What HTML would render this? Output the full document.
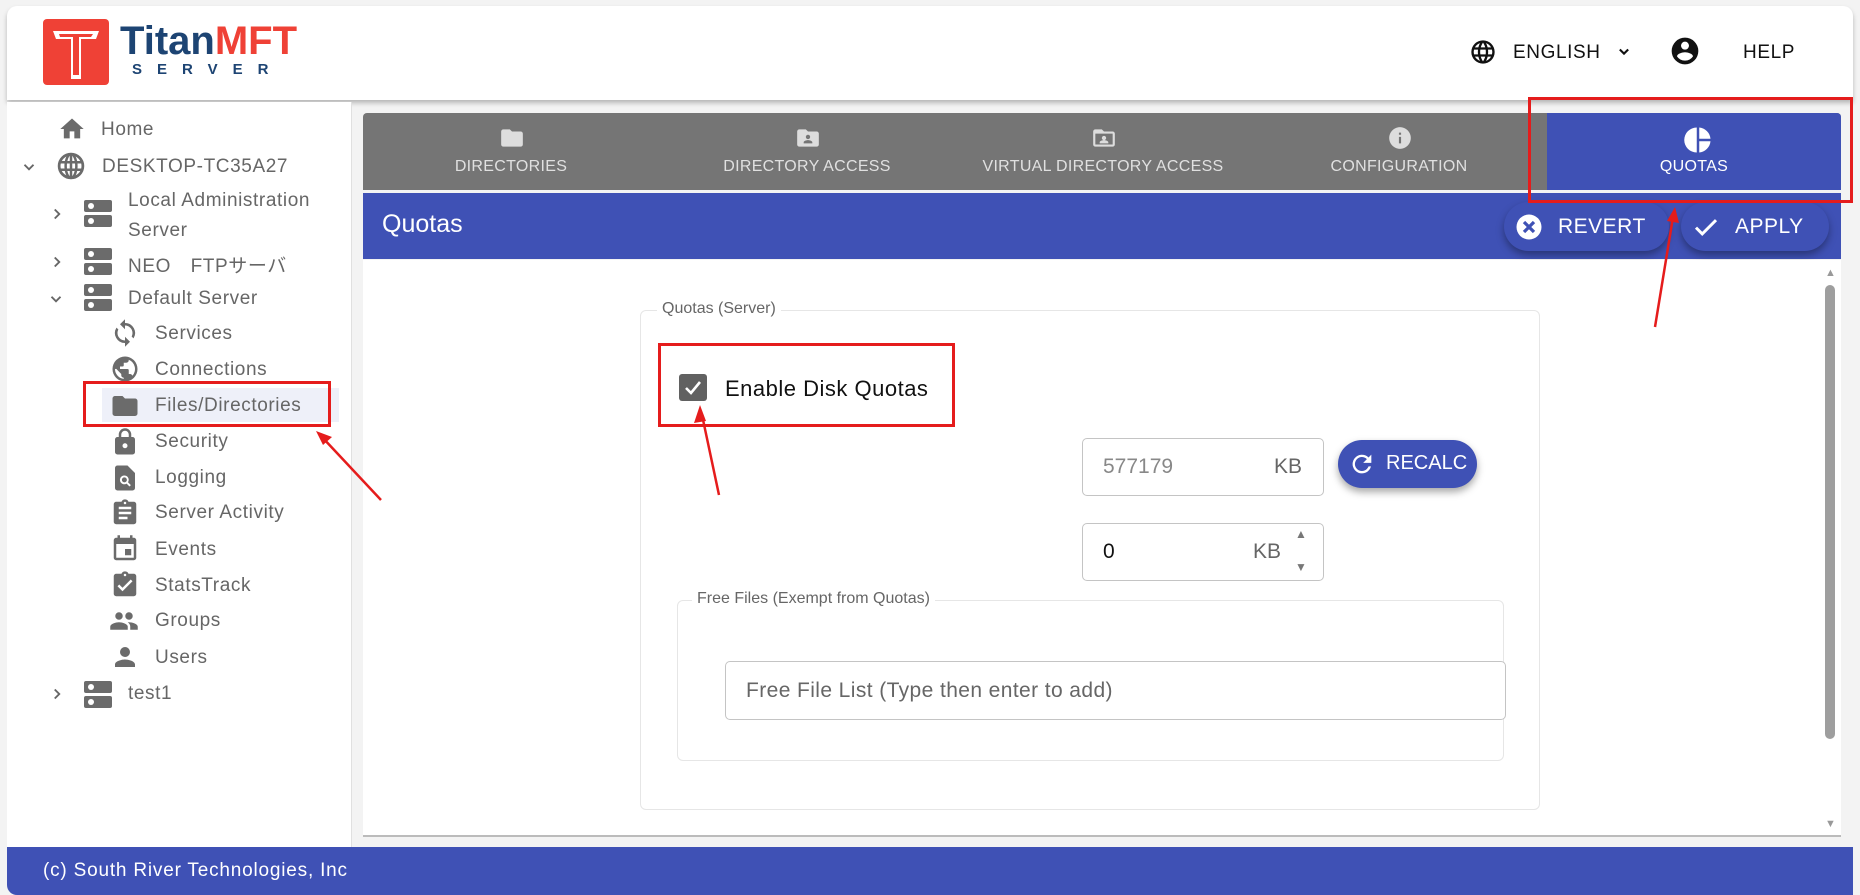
<!DOCTYPE html>
<html><head><meta charset="utf-8"><style>
*{box-sizing:border-box;margin:0;padding:0}
body{width:1860px;height:895px;overflow:hidden;background:#f3f3f3;font-family:"Liberation Sans","Noto Sans CJK JP",sans-serif;position:relative}
.a{position:absolute}
.hdr{left:7px;top:6px;width:1846px;height:94px;background:#fff;border-radius:10px 10px 0 0;box-shadow:0 3px 5px rgba(0,0,0,.25)}
.side{left:7px;top:102px;width:345px;height:746px;background:#fff;border-right:1px solid #e0e0e0}
.ti{color:#666;font-size:19px;white-space:nowrap;letter-spacing:0.6px}
.ti svg{position:absolute}
.main{left:363px;top:260px;width:1478px;height:577px;background:#fff;border-bottom:2px solid #bbb}
.tabs{left:363px;top:113px;width:1478px;height:77px;background:#757575;border-radius:4px 4px 0 0}
.tab{position:absolute;top:0;height:77px;width:296px;color:#e0e0e0;font-size:16px;text-align:center;letter-spacing:0.3px}
.tab span{position:absolute;left:0;right:0;top:45px}
.tab svg{position:absolute;left:136px;top:12px}
.blue{background:#3f51b5}
.btn{border-radius:25px;background:#3f51b5;color:#fff;box-shadow:0 4px 8px rgba(0,0,0,.35);font-size:21px}
.fs{border:1px solid #e6e6e6;border-radius:6px}
.lg{background:#fff;color:#666;font-size:16px;padding:0 5px}
.inp{border:1px solid #c4c4c4;border-radius:5px;background:#fff}
.red{border:3px solid #e51c1c}
</style></head><body>
<div class="a hdr"></div>
<svg class="a" style="left:43px;top:19px" width="66" height="66" viewBox="0 0 66 66"><rect width="66" height="66" rx="4" fill="#ef4136"/><path d="M10 12h46l-3 8H38v40h-10V20H13z" fill="#fff"/><path d="M16 15h34l-2 3H36v38h-6V18H17z" fill="#ef4136"/></svg>
<div class="a" style="left:120px;top:19px;font-size:40px;font-weight:bold;color:#1d4473;letter-spacing:0px">Titan<span style="color:#ef4136">MFT</span></div>
<div class="a" style="left:132px;top:61px;font-size:15px;font-weight:bold;color:#1d4473;letter-spacing:15px">SERVER</div>
<svg class="a" style="left:1469px;top:38px" width="28" height="28" viewBox="0 0 24 24"><path fill="#111" d="M12 2a10 10 0 100 20 10 10 0 000-20zm6.9 6h-2.9a15.7 15.7 0 00-1.4-3.6A8 8 0 0118.9 8zM12 4c.8 1.2 1.5 2.5 1.9 4h-3.8c.4-1.4 1.1-2.8 1.9-4zM4.3 14a8 8 0 010-4h3.4a16 16 0 000 4zm.8 2h2.9c.3 1.3.8 2.5 1.4 3.6A8 8 0 015.1 16zM8 8H5.1a8 8 0 014.3-3.6C8.8 5.5 8.4 6.7 8 8zm4 12c-.8-1.2-1.5-2.5-1.9-4h3.8c-.4 1.4-1.1 2.8-1.9 4zm2.3-6H9.7a14.7 14.7 0 010-4h4.6a14.7 14.7 0 010 4zm.3 5.6c.6-1.1 1.1-2.3 1.4-3.6h2.9a8 8 0 01-4.3 3.6zm1.7-5.6a16 16 0 000-4h3.4a8 8 0 010 4z"/></svg>
<div class="a" style="left:1513px;top:42px;font-size:19px;color:#111;letter-spacing:0.6px">ENGLISH</div>
<svg class="a" style="left:1614px;top:42px" width="20" height="20" viewBox="0 0 24 24"><path d="M7 9l5 5 5-5" stroke="#111" stroke-width="2.5" fill="none"/></svg>
<svg class="a" style="left:1669px;top:35px" width="32" height="32" viewBox="0 0 24 24"><path fill="#111" d="M12 2a10 10 0 100 20 10 10 0 000-20zm0 3a3 3 0 110 6 3 3 0 010-6zm0 14.2a7.2 7.2 0 01-6-3.2c0-2 4-3.1 6-3.1s6 1.1 6 3.1a7.2 7.2 0 01-6 3.2z"/></svg>
<div class="a" style="left:1743px;top:42px;font-size:19px;color:#111;letter-spacing:0.6px">HELP</div>

<div class="a side"></div>
<div class="a" style="left:102px;top:388px;width:237px;height:34px;background:#eef0f9"></div>
<svg class="a" style="left:57px;top:115px" width="30" height="28" viewBox="0 0 24 24"><path fill="#6b6b6b" d="M10 20v-6h4v6h5v-8h3L12 3 2 12h3v8z"/></svg>
<div class="a ti" style="left:101px;top:119px">Home</div>
<svg class="a" style="left:20px;top:158px" width="18" height="18" viewBox="0 0 24 24"><path d="M6 9l6 6 6-6" stroke="#666" stroke-width="2.5" fill="none"/></svg>
<svg class="a" style="left:56px;top:151px" width="30" height="30" viewBox="0 0 24 24"><circle cx="12" cy="12" r="9.5" fill="none" stroke="#6b6b6b" stroke-width="2.2"/><path d="M2.5 9h19M2.5 15h19M12 2.5v19" stroke="#6b6b6b" stroke-width="2"/><ellipse cx="12" cy="12" rx="4.3" ry="9.5" fill="none" stroke="#6b6b6b" stroke-width="2"/></svg>
<div class="a ti" style="left:102px;top:156px">DESKTOP-TC35A27</div>

<svg class="a" style="left:48px;top:205px" width="18" height="18" viewBox="0 0 24 24"><path d="M9 6l6 6-6 6" stroke="#666" stroke-width="2.5" fill="none"/></svg>
<div class="a" style="left:84px;top:200px;width:28px;height:28px"><div class="a" style="left:0;top:0;width:28px;height:12px;background:#6b6b6b;border-radius:2px"></div><div class="a" style="left:0;top:15px;width:28px;height:12px;background:#6b6b6b;border-radius:2px"></div><div class="a" style="left:4px;top:3px;width:6px;height:6px;border-radius:3px;background:#fff"></div><div class="a" style="left:4px;top:18px;width:6px;height:6px;border-radius:3px;background:#fff"></div></div>
<div class="a ti" style="left:128px;top:186px;line-height:30px">Local Administration<br>Server</div>

<svg class="a" style="left:48px;top:253px" width="18" height="18" viewBox="0 0 24 24"><path d="M9 6l6 6-6 6" stroke="#666" stroke-width="2.5" fill="none"/></svg>
<div class="a" style="left:84px;top:248px;width:28px;height:28px"><div class="a" style="left:0;top:0;width:28px;height:12px;background:#6b6b6b;border-radius:2px"></div><div class="a" style="left:0;top:15px;width:28px;height:12px;background:#6b6b6b;border-radius:2px"></div><div class="a" style="left:4px;top:3px;width:6px;height:6px;border-radius:3px;background:#fff"></div><div class="a" style="left:4px;top:18px;width:6px;height:6px;border-radius:3px;background:#fff"></div></div>
<div class="a ti" style="left:128px;top:251px">NEO　FTPサーバ</div>

<svg class="a" style="left:47px;top:290px" width="18" height="18" viewBox="0 0 24 24"><path d="M6 9l6 6 6-6" stroke="#666" stroke-width="2.5" fill="none"/></svg>
<div class="a" style="left:84px;top:284px;width:28px;height:28px"><div class="a" style="left:0;top:0;width:28px;height:12px;background:#6b6b6b;border-radius:2px"></div><div class="a" style="left:0;top:15px;width:28px;height:12px;background:#6b6b6b;border-radius:2px"></div><div class="a" style="left:4px;top:3px;width:6px;height:6px;border-radius:3px;background:#fff"></div><div class="a" style="left:4px;top:18px;width:6px;height:6px;border-radius:3px;background:#fff"></div></div>
<div class="a ti" style="left:128px;top:288px">Default Server</div>

<svg class="a" style="left:110px;top:318px" width="30" height="30" viewBox="0 0 24 24"><path fill="#6b6b6b" d="M12 4V1L8 5l4 4V6a6 6 0 016 6c0 1-.3 2-.7 2.8l1.5 1.5A8 8 0 0012 4zm0 14a6 6 0 01-6-6c0-1 .3-2 .7-2.8L5.2 7.7A8 8 0 0012 20v3l4-4-4-4z"/></svg>
<div class="a ti" style="left:155px;top:323px">Services</div>
<svg class="a" style="left:110px;top:354px" width="30" height="30" viewBox="0 0 24 24"><path fill="#6b6b6b" d="M12 2a10 10 0 100 20 10 10 0 000-20zm-1 17.9A8 8 0 014 12l1-.1L9 16v1a2 2 0 002 2zm6.9-2.5A2 2 0 0016 16h-1v-3a1 1 0 00-1-1H8v-2h2a1 1 0 001-1V7h2a2 2 0 002-2v-.4a8 8 0 012.9 12.8z"/></svg>
<div class="a ti" style="left:155px;top:359px">Connections</div>
<svg class="a" style="left:109px;top:391px" width="32" height="30" viewBox="0 0 24 24"><path fill="#6b6b6b" d="M10 4H4a2 2 0 00-2 2v12a2 2 0 002 2h16a2 2 0 002-2V8a2 2 0 00-2-2h-8z"/></svg>
<div class="a ti" style="left:155px;top:395px">Files/Directories</div>
<svg class="a" style="left:110px;top:427px" width="30" height="30" viewBox="0 0 24 24"><path fill="#6b6b6b" d="M18 8h-1V6A5 5 0 007 6v2H6a2 2 0 00-2 2v10a2 2 0 002 2h12a2 2 0 002-2V10a2 2 0 00-2-2zM9 6a3 3 0 016 0v2H9zm3 11a2 2 0 110-4 2 2 0 010 4z"/></svg>
<div class="a ti" style="left:155px;top:431px">Security</div>
<svg class="a" style="left:110px;top:463px" width="30" height="30" viewBox="0 0 24 24"><path fill="#6b6b6b" d="M14 2H6a2 2 0 00-2 2v16a2 2 0 002 2h12a2 2 0 002-2V8zm-2.5 15a3.5 3.5 0 112.9-1.6l2.3 2.3-1.1 1.1-2.3-2.3c-.5.3-1.1.5-1.8.5zm0-5.5a2 2 0 100 4 2 2 0 000-4z"/></svg>
<div class="a ti" style="left:155px;top:467px">Logging</div>
<svg class="a" style="left:110px;top:498px" width="30" height="30" viewBox="0 0 24 24"><path fill="#6b6b6b" d="M19 3h-4.2a3 3 0 00-5.6 0H5a2 2 0 00-2 2v14a2 2 0 002 2h14a2 2 0 002-2V5a2 2 0 00-2-2zm-7 0a1 1 0 110 2 1 1 0 010-2zm2 14H7v-2h7zm3-4H7v-2h10zm0-4H7V7h10z"/></svg>
<div class="a ti" style="left:155px;top:502px">Server Activity</div>
<svg class="a" style="left:110px;top:534px" width="30" height="30" viewBox="0 0 24 24"><path fill="#6b6b6b" d="M17 12h-5v5h5zM16 1v2H8V1H6v2H5a2 2 0 00-2 2v14a2 2 0 002 2h14a2 2 0 002-2V5a2 2 0 00-2-2h-1V1zm3 18H5V8h14z"/></svg>
<div class="a ti" style="left:155px;top:539px">Events</div>
<svg class="a" style="left:110px;top:570px" width="30" height="30" viewBox="0 0 24 24"><path fill="#6b6b6b" d="M19 3h-4.2a3 3 0 00-5.6 0H5a2 2 0 00-2 2v14a2 2 0 002 2h14a2 2 0 002-2V5a2 2 0 00-2-2zm-7 0a1 1 0 110 2 1 1 0 010-2zm-2 14l-4-4 1.4-1.4 2.6 2.6 6.6-6.6L18 9z"/></svg>
<div class="a ti" style="left:155px;top:575px">StatsTrack</div>
<svg class="a" style="left:107px;top:606px" width="34" height="30" viewBox="0 0 24 24"><path fill="#6b6b6b" d="M16 11a3 3 0 100-6 3 3 0 000 6zm-8 0a3 3 0 100-6 3 3 0 000 6zm0 2c-2.3 0-7 1.2-7 3.5V19h14v-2.5C15 14.2 10.3 13 8 13zm8 0h-1c1.2.8 2 2 2 3.5V19h6v-2.5c0-2.3-4.7-3.5-7-3.5z"/></svg>
<div class="a ti" style="left:155px;top:610px">Groups</div>
<svg class="a" style="left:110px;top:642px" width="30" height="30" viewBox="0 0 24 24"><path fill="#6b6b6b" d="M12 12a4 4 0 100-8 4 4 0 000 8zm0 2c-2.7 0-8 1.3-8 4v2h16v-2c0-2.7-5.3-4-8-4z"/></svg>
<div class="a ti" style="left:155px;top:647px">Users</div>
<svg class="a" style="left:48px;top:685px" width="18" height="18" viewBox="0 0 24 24"><path d="M9 6l6 6-6 6" stroke="#666" stroke-width="2.5" fill="none"/></svg>
<div class="a" style="left:84px;top:681px;width:28px;height:28px"><div class="a" style="left:0;top:0;width:28px;height:12px;background:#6b6b6b;border-radius:2px"></div><div class="a" style="left:0;top:15px;width:28px;height:12px;background:#6b6b6b;border-radius:2px"></div><div class="a" style="left:4px;top:3px;width:6px;height:6px;border-radius:3px;background:#fff"></div><div class="a" style="left:4px;top:18px;width:6px;height:6px;border-radius:3px;background:#fff"></div></div>
<div class="a ti" style="left:128px;top:683px">test1</div>

<div class="a tabs">
 <div class="tab" style="left:0"><svg width="26" height="26" viewBox="0 0 24 24"><path fill="#ddd" d="M10 4H4a2 2 0 00-2 2v12a2 2 0 002 2h16a2 2 0 002-2V8a2 2 0 00-2-2h-8z"/></svg><span>DIRECTORIES</span></div>
 <div class="tab" style="left:296px"><svg width="26" height="26" viewBox="0 0 24 24"><path fill="#ddd" d="M20 6h-8l-2-2H4a2 2 0 00-2 2v12a2 2 0 002 2h16a2 2 0 002-2V8a2 2 0 00-2-2zm-8 3a2 2 0 110 4 2 2 0 010-4zm4 8H8v-1c0-1.3 2.7-2 4-2s4 .7 4 2z"/></svg><span>DIRECTORY ACCESS</span></div>
 <div class="tab" style="left:592px"><svg width="26" height="26" viewBox="0 0 24 24"><path fill="#ddd" d="M20 6h-8l-2-2H4a2 2 0 00-2 2v12a2 2 0 002 2h16a2 2 0 002-2V8a2 2 0 00-2-2zm0 12H4V8h16zm-8-8a2 2 0 110 4 2 2 0 010-4zm4 7H8v-1c0-1.3 2.7-2 4-2s4 .7 4 2z"/></svg><span>VIRTUAL DIRECTORY ACCESS</span></div>
 <div class="tab" style="left:888px"><svg width="26" height="26" viewBox="0 0 24 24"><path fill="#ddd" d="M12 2a10 10 0 100 20 10 10 0 000-20zm1 15h-2v-6h2zm0-8h-2V7h2z"/></svg><span>CONFIGURATION</span></div>
 <div class="tab blue" style="left:1184px;width:294px;color:#fff;border-radius:0 4px 0 0"><svg width="30" height="30" viewBox="0 0 24 24"><path fill="#fff" d="M11 2v20a10 10 0 010-20zm2 0v9h9a10 10 0 00-9-9zm0 11v9a10 10 0 009-9z"/></svg><span>QUOTAS</span></div>
</div>
<div class="a blue" style="left:363px;top:193px;width:1478px;height:66px"></div>
<div class="a" style="left:382px;top:210px;font-size:25px;color:#fff">Quotas</div>
<div class="a btn" style="left:1504px;top:202px;width:165px;height:49px"><svg class="a" style="left:10px;top:10px" width="30" height="30" viewBox="0 0 24 24"><circle cx="12" cy="12" r="10" fill="#fff"/><path d="M8 8l8 8M16 8l-8 8" stroke="#3f51b5" stroke-width="2.6"/></svg><span class="a" style="left:54px;top:13px;letter-spacing:0.5px">REVERT</span></div>
<div class="a btn" style="left:1681px;top:202px;width:148px;height:49px"><svg class="a" style="left:10px;top:10px" width="30" height="30" viewBox="0 0 24 24"><path d="M4 12.5l5 5L20 6.5" stroke="#fff" stroke-width="2.4" fill="none"/></svg><span class="a" style="left:54px;top:13px;letter-spacing:0.5px">APPLY</span></div>
<div class="a red" style="left:1528px;top:97px;width:325px;height:106px"></div>

<div class="a main"></div>
<div class="a" style="left:1825px;top:267px;width:10px;height:10px;color:#999;font-size:11px">▲</div>
<div class="a" style="left:1825px;top:285px;width:10px;height:454px;background:#9e9e9e;border-radius:5px"></div>
<div class="a" style="left:1825px;top:818px;width:10px;height:10px;color:#999;font-size:11px">▼</div>

<div class="a fs" style="left:640px;top:310px;width:900px;height:500px"></div>
<div class="a lg" style="left:657px;top:300px">Quotas (Server)</div>
<div class="a" style="left:679px;top:374px;width:28px;height:27px;background:#616161;border-radius:3px"><svg width="28" height="27" viewBox="0 0 28 27"><path d="M7 14l5 5 9-11" stroke="#fff" stroke-width="2.6" fill="none"/></svg></div>
<div class="a" style="left:725px;top:376px;font-size:22px;color:#111;letter-spacing:0.5px">Enable Disk Quotas</div>
<div class="a red" style="left:658px;top:343px;width:297px;height:84px"></div>

<div class="a inp" style="left:1082px;top:438px;width:242px;height:58px"></div>
<div class="a" style="left:1103px;top:455px;font-size:21px;color:#888">577179</div>
<div class="a" style="left:1274px;top:455px;font-size:21px;color:#666">KB</div>
<div class="a btn" style="left:1338px;top:440px;width:139px;height:48px"><svg class="a" style="left:10px;top:10px" width="28" height="28" viewBox="0 0 24 24"><path fill="#fff" d="M17.6 6.4A8 8 0 1019.7 14h-2.1a6 6 0 11-1.4-6.2L13 11h7V4z"/></svg><span class="a" style="left:48px;top:12px;font-size:20px">RECALC</span></div>

<div class="a inp" style="left:1082px;top:523px;width:242px;height:58px"></div>
<div class="a" style="left:1103px;top:540px;font-size:21px;color:#111">0</div>
<div class="a" style="left:1253px;top:540px;font-size:21px;color:#666">KB</div>
<div class="a" style="left:1295px;top:527px;font-size:12px;color:#777">▲</div>
<div class="a" style="left:1295px;top:560px;font-size:12px;color:#777">▼</div>

<div class="a fs" style="left:677px;top:600px;width:827px;height:161px"></div>
<div class="a lg" style="left:692px;top:590px">Free Files (Exempt from Quotas)</div>
<div class="a inp" style="left:725px;top:661px;width:781px;height:59px"></div>
<div class="a" style="left:746px;top:679px;font-size:21px;color:#666;letter-spacing:0.4px">Free File List (Type then enter to add)</div>

<div class="a blue" style="left:7px;top:847px;width:1846px;height:48px;border-radius:0 0 0 10px"></div>
<div class="a" style="left:43px;top:860px;font-size:19px;color:#fff;letter-spacing:0.8px">(c) South River Technologies, Inc</div>

<div class="a red" style="left:83px;top:381px;width:248px;height:46px"></div>
<svg class="a" style="left:0;top:0" width="1860" height="895" viewBox="0 0 1860 895">
<g stroke="#e51c1c" stroke-width="2.5" fill="#e51c1c">
<line x1="381" y1="500" x2="322" y2="437"/><path d="M316 431l16 6-9 8z" stroke="none"/>
<line x1="719" y1="495" x2="702" y2="415"/><path d="M700 405l6 16-12 2z" stroke="none"/>
<line x1="1655" y1="327" x2="1673" y2="217"/><path d="M1675 207l4 16-12-2z" stroke="none"/>
</g></svg>
</body></html>
